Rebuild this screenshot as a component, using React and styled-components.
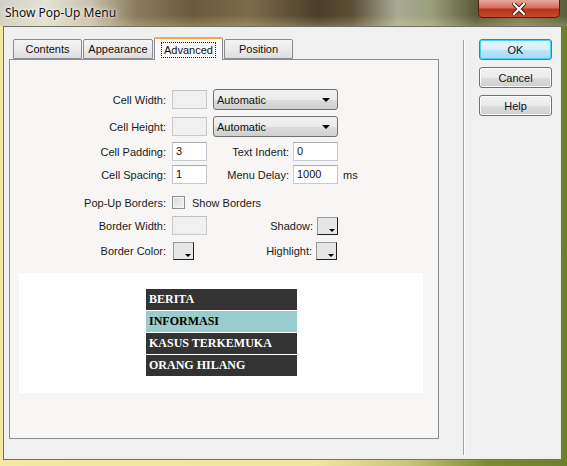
import React from "react";
import styled, { createGlobalStyle } from "styled-components";

const Global = createGlobalStyle`
  html, body { margin: 0; padding: 0; }
  body { width: 567px; height: 466px; overflow: hidden; font-family: "Liberation Sans", Arial, sans-serif; }
`;

const Frame = styled.div`
  width: 567px;
  height: 466px;
  display: flex;
  flex-direction: column;
  background: linear-gradient(to right, #f3e8a4 0%, #f2e7a0 55%, #c8c678 72%, #7d8b33 86%, #6f7f2c 100%);
`;

const TitleBar = styled.div`
  height: 26px;
  display: flex;
  align-items: flex-start;
  justify-content: space-between;
  background:
    linear-gradient(to bottom, rgba(255,255,255,0) 60%, rgba(240,230,170,0.25) 100%),
    linear-gradient(to right, #cfd0c4 0%, #e4e2d6 8%, #c9c2ad 16%, #8a7b5c 24%, #6a5a3c 34%, #7c6c4a 44%, #4a3e2a 56%, #5a4e36 62%, #a9aa92 70%, #9aa07a 76%, #5b5a38 84%, #7a7a52 92%, #59603a 100%);
`;

const Title = styled.div`
  font-family: "Noto Sans", "Liberation Sans", sans-serif;
  font-size: 12px;
  color: #111;
  padding: 4px 0 0 5px;
  text-shadow: 0 0 6px rgba(255,255,255,0.9), 0 0 3px rgba(255,255,255,0.9);
`;

const CloseButton = styled.div`
  width: 82px;
  height: 18px;
  margin-right: 7px;
  border: 1px solid #5a1a10;
  border-top: none;
  border-radius: 0 0 5px 5px;
  background: linear-gradient(to bottom, #e8a89a 0%, #d4715c 45%, #b8321c 55%, #c84a2c 100%);
  display: flex;
  align-items: center;
  justify-content: center;
  box-sizing: border-box;
`;

const Client = styled.div`
  margin-left: 3px;
  width: 559px;
  height: 434px;
  box-sizing: border-box;
  border: 1px solid #6e6e6e;
  background: #f0f0f0;
  display: flex;
`;

const LeftCol = styled.div`
  width: 435px;
  padding: 10px 0 0 5px;
  box-sizing: border-box;
  display: flex;
  flex-direction: column;
`;

const TabRow = styled.div`
  display: flex;
  align-items: flex-end;
  height: 22px;
  padding-left: 4px;
  gap: 1px;
  position: relative;
  z-index: 1;
`;

const Tab = styled.div`
  width: ${p => p.$w}px;
  height: ${p => (p.$active ? 23 : 20)}px;
  margin-bottom: ${p => (p.$active ? -1 : 0)}px;
  box-sizing: border-box;
  border: 1px solid #898c95;
  border-bottom: ${p => (p.$active ? "none" : "1px solid #898c95")};
  border-top: ${p => (p.$active ? "2px solid #f0a840" : "1px solid #898c95")};
  border-radius: 2px 2px 0 0;
  background: ${p => (p.$active ? "#fbfaf9" : "linear-gradient(to bottom, #f4f4f4 0%, #ebebeb 50%, #dedede 100%)")};
  display: flex;
  align-items: center;
  justify-content: center;
  font-size: 11px;
  color: #111;
`;

const FocusText = styled.span`
  outline: 1px dotted #222;
  outline-offset: 1px;
  padding: 0 1px;
`;

const Panel = styled.div`
  width: 430px;
  height: 380px;
  box-sizing: border-box;
  border: 1px solid #898c95;
  background: #f8f6f4;
  padding: 29px 0 0 9px;
  display: flex;
  flex-direction: column;
`;

const Row = styled.div`
  display: flex;
  align-items: center;
  height: ${p => p.$h || 19}px;
  margin-top: ${p => p.$mt || 0}px;
`;

const Label = styled.div`
  width: ${p => p.$w}px;
  text-align: right;
  font-size: 11px;
  color: #1a1a1a;
  margin-right: ${p => (p.$mr === undefined ? 6 : p.$mr)}px;
  white-space: nowrap;
`;

const Input = styled.div`
  width: ${p => p.$w || 35}px;
  height: 19px;
  box-sizing: border-box;
  border: 1px solid ${p => (p.$disabled ? "#c9c9c9" : "#c5cad2")};
  border-top-color: ${p => (p.$disabled ? "#c0c0c0" : "#abadb3")};
  background: ${p => (p.$disabled ? "#f0f0f0" : "#ffffff")};
  font-size: 11px;
  padding: 2px 0 0 3px;
  color: #111;
`;

const Select = styled.div`
  width: 125px;
  height: 21px;
  box-sizing: border-box;
  margin-left: 6px;
  border: 1px solid #707070;
  border-radius: 3px;
  background: linear-gradient(to bottom, #f2f2f2 0%, #ebebeb 50%, #dddddd 51%, #cfcfcf 100%);
  display: flex;
  align-items: center;
  justify-content: space-between;
  padding: 0 7px 0 3px;
  font-size: 11px;
  color: #111;
`;

const Arrow = styled.div`
  width: 0;
  height: 0;
  border-left: 4px solid transparent;
  border-right: 4px solid transparent;
  border-top: 4px solid #000;
`;

const Swatch = styled.div`
  width: 21px;
  height: 18px;
  box-sizing: border-box;
  margin-left: ${p => p.$ml || 0}px;
  border: 1px solid #9a9a9a;
  border-right-color: #202020;
  border-bottom-color: #202020;
  background: #e6e6e6;
  position: relative;
  &::after {
    content: "";
    position: absolute;
    right: 2px;
    bottom: 2px;
    border-left: 3px solid transparent;
    border-right: 3px solid transparent;
    border-top: 3px solid #000;
  }
`;

const Checkbox = styled.div`
  width: 13px;
  height: 13px;
  box-sizing: border-box;
  border: 1px solid #8e8f8f;
  background: linear-gradient(135deg, #dcdcdc 0%, #f2f2f2 100%);
  box-shadow: inset 0 0 0 1px #f4f4f4;
  margin-right: 7px;
`;

const Text = styled.span`
  font-size: 11px;
  color: #1a1a1a;
  margin-left: ${p => p.$ml || 0}px;
`;

const Preview = styled.div`
  width: 404px;
  height: 120px;
  margin-top: 13px;
  background: #ffffff;
  padding: 16px 0 0 127px;
  box-sizing: border-box;
  display: flex;
  flex-direction: column;
  gap: 1px;
`;

const MenuItem = styled.div`
  width: 151px;
  height: 21px;
  box-sizing: border-box;
  background: ${p => (p.$hl ? "#99cccc" : "#333333")};
  color: ${p => (p.$hl ? "#000000" : "#ffffff")};
  font-family: "Liberation Serif", "Times New Roman", serif;
  font-weight: bold;
  font-size: 12px;
  display: flex;
  align-items: center;
  padding-left: 3px;
`;

const Separator = styled.div`
  width: 1px;
  height: 415px;
  margin: 13px 0 0 24px;
  background: #a0a0a0;
  border-right: 1px solid #ffffff;
`;

const ButtonCol = styled.div`
  margin-left: 14px;
  padding-top: 12px;
  display: flex;
  flex-direction: column;
  gap: 7px;
`;

const Button = styled.div`
  width: 73px;
  height: 21px;
  box-sizing: border-box;
  border: 1px solid ${p => (p.$default ? "#3c7fb1" : "#707070")};
  border-radius: 3px;
  background: ${p =>
    p.$default
      ? "linear-gradient(to bottom, #eaf6fd 0%, #d9f0fc 50%, #bee6fd 51%, #a7d9f5 100%)"
      : "linear-gradient(to bottom, #f2f2f2 0%, #ebebeb 50%, #dddddd 51%, #cfcfcf 100%)"};
  box-shadow: ${p => (p.$default ? "inset 0 0 0 1px #48d2f9" : "inset 0 0 0 1px #fcfcfc")};
  display: flex;
  align-items: center;
  justify-content: center;
  font-size: 11px;
  color: #111;
`;

export default function App() {
  return (
    <>
      <Global />
      <Frame>
        <TitleBar>
          <Title>Show Pop-Up Menu</Title>
          <CloseButton>
            <svg width="14" height="12" viewBox="0 0 14 12">
              <path d="M2 1 L12 11 M12 1 L2 11" stroke="#4a1208" strokeWidth="4" strokeLinecap="square" />
              <path d="M2 1 L12 11 M12 1 L2 11" stroke="#ffffff" strokeWidth="2.2" strokeLinecap="square" />
            </svg>
          </CloseButton>
        </TitleBar>
        <Client>
          <LeftCol>
            <TabRow>
              <Tab $w={69}>Contents</Tab>
              <Tab $w={70}>Appearance</Tab>
              <Tab $w={69} $active><FocusText>Advanced</FocusText></Tab>
              <Tab $w={69}>Position</Tab>
            </TabRow>
            <Panel>
              <Row $h={21}>
                <Label $w={147}>Cell Width:</Label>
                <Input $disabled />
                <Select>Automatic<Arrow /></Select>
              </Row>
              <Row $h={21} $mt={6}>
                <Label $w={147}>Cell Height:</Label>
                <Input $disabled />
                <Select>Automatic<Arrow /></Select>
              </Row>
              <Row $mt={5}>
                <Label $w={147}>Cell Padding:</Label>
                <Input>3</Input>
                <Label $w={82} $mr={4}>Text Indent:</Label>
                <Input $w={45}>0</Input>
              </Row>
              <Row $mt={4}>
                <Label $w={147}>Cell Spacing:</Label>
                <Input>1</Input>
                <Label $w={82} $mr={4}>Menu Delay:</Label>
                <Input $w={45}>1000</Input>
                <Text $ml={5}>ms</Text>
              </Row>
              <Row $mt={8} $h={21}>
                <Label $w={147}>Pop-Up Borders:</Label>
                <Checkbox />
                <Text>Show Borders</Text>
              </Row>
              <Row $mt={3}>
                <Label $w={147}>Border Width:</Label>
                <Input $disabled />
                <Label $w={106} $mr={4}>Shadow:</Label>
                <Swatch />
              </Row>
              <Row $mt={6}>
                <Label $w={147}>Border Color:</Label>
                <Swatch $ml={1} />
                <Label $w={118} $mr={4}>Highlight:</Label>
                <Swatch />
              </Row>
              <Preview>
                <MenuItem>BERITA</MenuItem>
                <MenuItem $hl>INFORMASI</MenuItem>
                <MenuItem>KASUS TERKEMUKA</MenuItem>
                <MenuItem>ORANG HILANG</MenuItem>
              </Preview>
            </Panel>
          </LeftCol>
          <Separator />
          <ButtonCol>
            <Button $default>OK</Button>
            <Button>Cancel</Button>
            <Button>Help</Button>
          </ButtonCol>
        </Client>
      </Frame>
    </>
  );
}
